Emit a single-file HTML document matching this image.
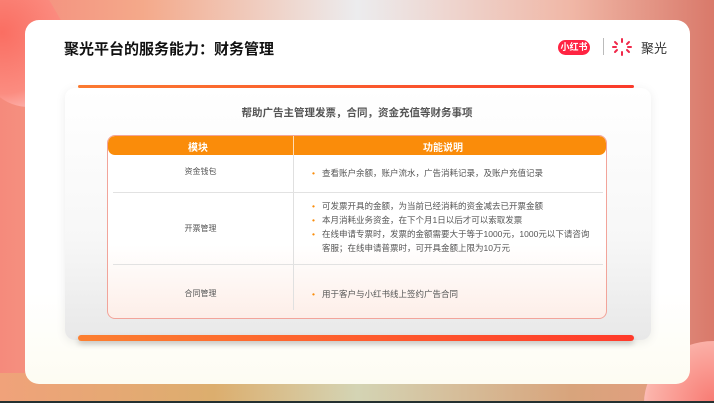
<!DOCTYPE html>
<html><head><meta charset="utf-8"><style>
*{margin:0;padding:0;box-sizing:border-box}
html,body{width:714px;height:403px;overflow:hidden}
body{position:relative;font-family:"Liberation Sans","Noto Sans CJK SC",sans-serif;
background:linear-gradient(90deg,#f58a7c 0%,#f4a98a 20%,#ececee 50%,#f0b7a6 80%,#d9796a 100%)}
.bl{position:absolute;left:0;right:0;bottom:0;height:30px;background:linear-gradient(90deg,#f0a27a,#dcae6e 30%,#d4d4b4 50%,#d8a47c 80%,#e89a80)}
.blob1{position:absolute;left:-30px;top:-30px;width:95px;height:140px;border-radius:50px;background:radial-gradient(circle at 40% 40%,#fa6e62,#fb8c80 60%,#fdd 100%);transform:rotate(-30deg)}
.blob2{position:absolute;right:0;bottom:0;width:70px;height:62px;border-top-left-radius:70px 62px;background:radial-gradient(circle at 100% 100%,#f87a72,#fbb3aa 70%,#fde 100%)}
.card{position:absolute;left:25px;top:20px;width:665px;height:364px;border-radius:14px;background:linear-gradient(180deg,#fff 0%,#fff 75%,#fdfcf2 100%)}
.title{position:absolute;left:64px;top:38px;font-size:15px;font-weight:bold;color:#111}
.logo{position:absolute;left:558px;top:40px;width:32px;height:15px;border-radius:8px;background:#ff2442;color:#fff;font-size:9px;font-weight:bold;text-align:center;line-height:15px}
.sep{position:absolute;left:603px;top:38px;width:1px;height:17px;background:#bbb}
.jg{position:absolute;left:641px;top:38px;font-size:13px;color:#333}
.panel{position:absolute;left:65px;top:88px;width:586px;height:252px;border-radius:10px;background:linear-gradient(180deg,#fff 0%,#f7f7f7 60%,#e8e8e8 100%);box-shadow:0 2px 10px rgba(0,0,0,.08)}
.tl{position:absolute;left:78px;top:85px;width:556px;height:3px;border-radius:2px;background:linear-gradient(90deg,#fb7a30,#fa3a2a)}
.bb{position:absolute;left:78px;top:335px;width:556px;height:6px;border-radius:3px;background:linear-gradient(90deg,#fc7f30,#ff3a2a);box-shadow:0 3px 6px rgba(0,0,0,.2)}
.sub{position:absolute;left:0;width:714px;top:105px;text-align:center;font-size:10.5px;font-weight:bold;color:#555}
.tbl{position:absolute;left:107px;top:135px;width:500px;height:184px;border-radius:8px;border:1px solid #f2a49a;background:linear-gradient(180deg,#fff 60%,#fdeee8 100%);overflow:hidden}
.hd{position:absolute;left:0;top:0;width:100%;height:19px;background:#fa8c0a;color:#fff;font-size:10px;font-weight:bold;border-radius:7px}
.hd span{position:absolute;top:3px}
.vl{position:absolute;left:185px;top:19px;width:1px;height:155px;background:#e0e0e0}
.hl{position:absolute;left:5px;width:490px;height:1px;background:#e2e2e2}
.m{position:absolute;font-size:8px;color:#555;width:185px;text-align:center}
.d{position:absolute;left:214px;font-size:8.5px;color:#555;line-height:14px}
.d i{color:#fa8c0a;font-style:normal;position:absolute;left:-10px}
.bot{position:absolute;left:0;right:0;bottom:0;height:2px;background:#243030}
</style></head><body>
<div class="bl"></div><div class="blob1"></div><div class="blob2"></div>
<div class="card"></div>
<div class="title">聚光平台的服务能力：财务管理</div>
<div class="logo">小红书</div><div class="sep"></div>
<svg style="position:absolute;left:612px;top:38px" width="20" height="18" viewBox="0 0 20 18"><g stroke="#f0284a" stroke-width="2" stroke-linecap="round"><path d="M10 1v3M10 14v3M3 4l2 2M17 4l-2 2M3 14l2-2M17 14l-2-2M1 9h3M16 9h3"/></g></svg>
<div class="jg">聚光</div>
<div class="panel"></div>
<div class="tl"></div>
<div class="sub">帮助广告主管理发票，合同，资金充值等财务事项</div>
<div class="tbl">
<div class="hd"><span style="left:80px">模块</span><span style="left:315px">功能说明</span><div style="position:absolute;left:185px;top:0;width:1px;height:19px;background:#fff;opacity:.7"></div></div>
<div class="vl"></div>
<div class="hl" style="top:56px"></div>
<div class="hl" style="top:128px"></div>
<div class="m" style="top:30px">资金钱包</div>
<div class="m" style="top:87px">开票管理</div>
<div class="m" style="top:152px">合同管理</div>
<div class="d" style="top:30px"><i>•</i>查看账户余额，账户流水，广告消耗记录，及账户充值记录</div>
<div class="d" style="top:63px;width:275px"><div style="position:relative"><i>•</i>可发票开具的金额，为当前已经消耗的资金减去已开票金额</div><div style="position:relative"><i>•</i>本月消耗业务资金，在下个月1日以后才可以索取发票</div><div style="position:relative"><i>•</i>在线申请专票时，发票的金额需要大于等于1000元，1000元以下请咨询客服；在线申请普票时，可开具金额上限为10万元</div></div>
<div class="d" style="top:151px"><i>•</i>用于客户与小红书线上签约广告合同</div>
</div>
<div class="bb"></div>
<div class="bot"></div>
</body></html>
